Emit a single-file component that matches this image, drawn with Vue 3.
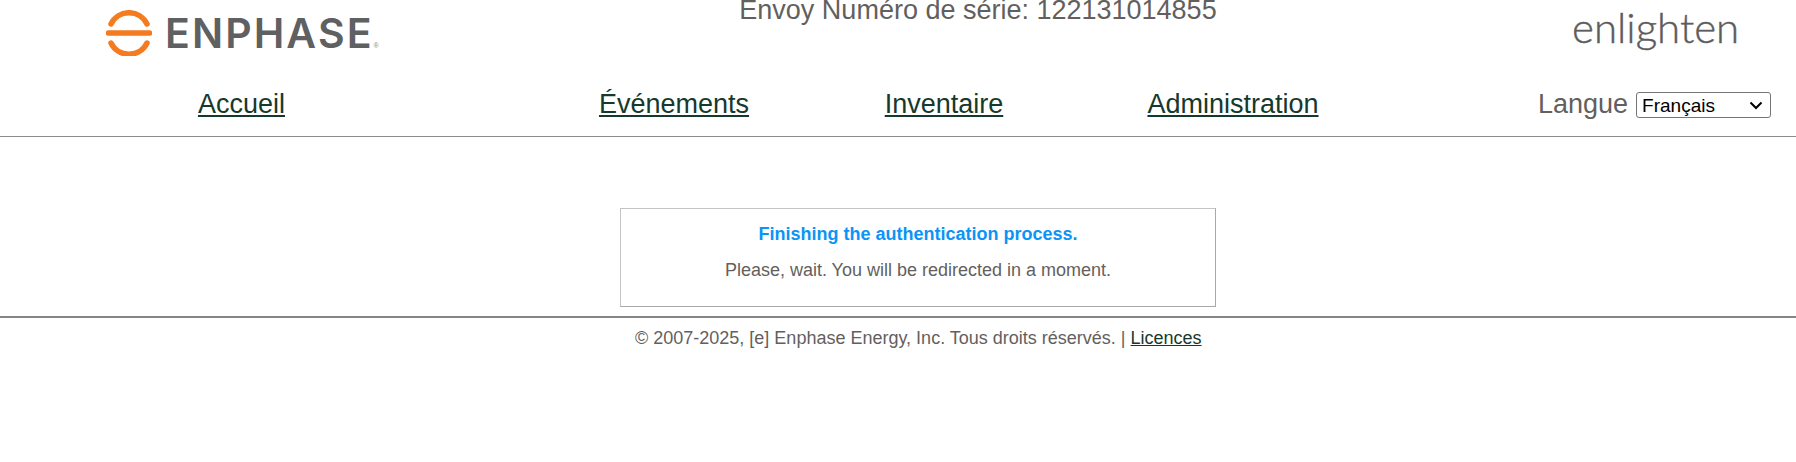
<template>
  <div class="page">
    <header class="top">
      <div class="logo">
        <svg class="mark" width="46" height="46" viewBox="0 0 46 46">
          <path d="M5 14 A 20 20 0 0 1 41 14" fill="none" stroke="#f47b20" stroke-width="5.5" stroke-linecap="round" />
          <path d="M2.500 23 H43.500" fill="none" stroke="#f47b20" stroke-width="5.500" stroke-linecap="round" />
          <path d="M5 33 A 20 20 0 0 0 41 33" fill="none" stroke="#f47b20" stroke-width="5.500" stroke-linecap="round" />
        </svg>
        <span class="brand">ENPHASE</span>
        <span class="reg">®</span>
      </div>
      <div class="serial">Envoy Numéro de série: {{ serial }}</div>
      <div class="product">enlighten</div>
    </header>

    <nav class="nav">
      <a v-for="item in links" :key="item" href="#" class="nav-link">{{ item }}</a>
      <div class="lang">
        <span>Langue</span>
        <div class="select-wrap">
          <select>
            <option>Français</option>
            <option>English</option>
          </select>
          <svg class="chevron" width="14" height="9" viewBox="0 0 14 9">
            <path d="M1.500 1.500 L7 7 L12.500 1.500" fill="none" stroke="#000" stroke-width="2" />
          </svg>
        </div>
      </div>
    </nav>

    <main class="content">
      <div class="box">
        <p class="title">Finishing the authentication process.</p>
        <p class="msg">Please, wait. You will be redirected in a moment.</p>
      </div>
    </main>

    <footer class="footer">
      © 2007-2025, [e] Enphase Energy, Inc. Tous droits réservés. | <a href="#">Licences</a>
    </footer>
  </div>
</template>

<script setup>
const serial = '122131014855'
const links = ['Accueil', 'Événements', 'Inventaire', 'Administration']
</script>

<style>
body {
  background: #fff;
}
</style>

<style scoped>
.page {
  font-family: "Liberation Sans", Arial, sans-serif;
  color: #635f5e;
}

.top {
  display: grid;
  grid-template-columns: 500px 956px 1fr;
  height: 68px;
}

.logo {
  display: flex;
  align-items: flex-start;
  padding: 10px 0 0 106px;
}

.mark {
  flex: none;
}

.brand {
  margin: -2px 0 0 13px;
  font-family: Inter, sans-serif;
  font-size: 41px;
  line-height: 50px;
  font-weight: 600;
  letter-spacing: 2.100px;
  color: #5f6062;
}

.reg {
  margin: 32px 0 0 0;
  font-size: 7px;
  color: #8a8a8a;
}

.serial {
  font-size: 27px;
  line-height: 24px;
  margin-top: -2px;
  text-align: center;
}

.product {
  font-family: Lato, sans-serif;
  font-size: 42px;
  line-height: 46px;
  font-weight: 300;
  padding: 4px 0 0 116px;
  color: #5c5c5c;
  -webkit-text-stroke: 0.4px #5c5c5c;
}

.nav {
  display: grid;
  grid-template-columns: 483px 382px 158px 420px 1fr;
  align-items: center;
  justify-items: center;
  box-sizing: border-box;
  height: 69px;
  padding-top: 3px;
  border-bottom: 1px solid #8c8c8c;
}

.nav-link {
  font-size: 27px;
  line-height: 32px;
  color: #15392c;
}

.lang {
  display: flex;
  align-items: center;
  gap: 8px;
  font-size: 27px;
  line-height: 32px;
  justify-self: start;
  padding-left: 95px;
}

.select-wrap {
  position: relative;
  display: flex;
  margin-top: 3px;
}

.select-wrap select {
  appearance: none;
  width: 135px;
  height: 26px;
  padding: 0 0 0 5px;
  font-family: "Liberation Sans", Arial, sans-serif;
  font-size: 19px;
  color: #000;
  background: #fff;
  border: 1px solid #767676;
  border-radius: 3px;
}

.chevron {
  position: absolute;
  right: 8px;
  top: 9px;
  pointer-events: none;
}

.content {
  padding: 71px 0 9px 620px;
  border-bottom: 2px solid #858585;
}

.box {
  box-sizing: border-box;
  width: 596px;
  height: 99px;
  border: 1px solid #c4c4c4;
  border-right-color: #a8a8a8;
  border-bottom-color: #a8a8a8;
  text-align: center;
}

.box p {
  margin: 0;
}

.title {
  padding-top: 15px;
  font-size: 18px;
  line-height: 20px;
  font-weight: 700;
  color: #0a94f6;
}

.msg {
  padding-top: 16px;
  font-size: 18px;
  line-height: 20px;
}

.footer {
  padding: 10px 0 0 635px;
  font-size: 18px;
  line-height: 20px;
}

.footer a {
  color: #15392c;
}
</style>
